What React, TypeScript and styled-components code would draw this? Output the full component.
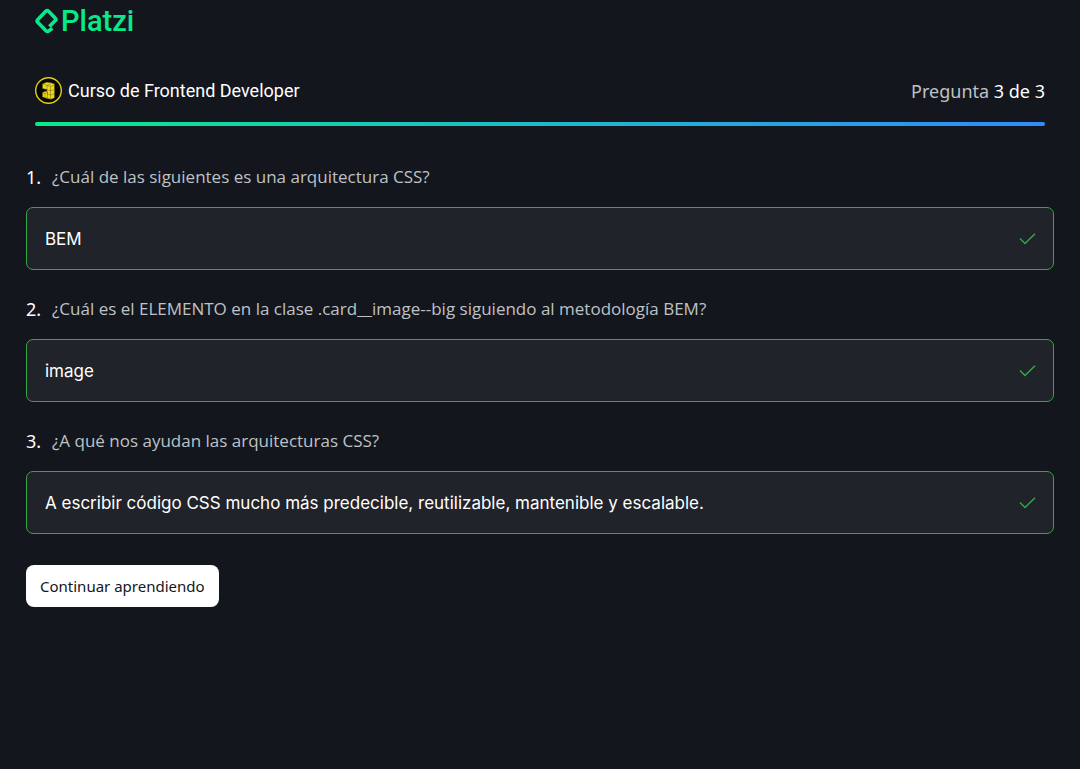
import React from "react";
import styled, { createGlobalStyle } from "styled-components";

const GlobalStyle = createGlobalStyle`
  *, *::before, *::after { box-sizing: border-box; }
  body {
    margin: 0;
    background: #13161c;
    color: #ffffff;
    font-family: Roboto, "Liberation Sans", sans-serif;
    font-size: 18px;
    line-height: 24px;
  }
  h1, p, ol { margin: 0; padding: 0; font: inherit; }
`;

const Page = styled.div`
  min-height: 100vh;
  padding: 5px 26px 24px;
`;

const Header = styled.header`
  padding: 0 9px;
`;

const LogoLink = styled.a`
  display: flex;
  align-items: center;
  gap: 2px;
  width: fit-content;
  height: 32px;
  color: #0ae98a;
  font: 500 29px/32px Roboto, sans-serif;
  text-decoration: none;
`;

const CourseBar = styled.div`
  display: flex;
  align-items: center;
  justify-content: space-between;
  padding-top: 40px;
`;

const Course = styled.div`
  display: flex;
  align-items: center;
  gap: 6px;
  height: 27px;
`;

const Counter = styled.p`
  color: #bec2c7;
  font-family: "Noto Sans", sans-serif;

  strong {
    color: #ffffff;
    font-weight: 400;
  }
`;

const Progress = styled.div`
  height: 4px;
  margin-top: 18px;
  border-radius: 2px;
  background: linear-gradient(90deg, #0ae98a, #1ebac8 50%, #2f8bff);
`;

const Questions = styled.ol`
  display: grid;
  gap: 27px;
  padding-top: 39px;
  list-style: none;
`;

const Question = styled.li`
  display: grid;
  gap: 18px;
`;

const Prompt = styled.p`
  display: flex;
  gap: 10px;
  color: #bec2c7;
  font-family: "Open Sans", sans-serif;
  font-size: 17px;
`;

const Num = styled.span`
  min-width: 16px;
  color: #ffffff;
  font-family: "Noto Sans", sans-serif;
  font-size: 18px;
`;

const Answer = styled.div`
  display: flex;
  align-items: center;
  justify-content: space-between;
  gap: 16px;
  min-height: 63px;
  padding: 12px 17px 12px 18px;
  border: 1px solid #35a648;
  border-radius: 7px;
  background: #20232a;
  font-family: Inter, sans-serif;
  font-size: 17px;
`;

const ContinueButton = styled.button`
  height: 42px;
  margin-top: 31px;
  padding: 0 14px;
  border: 0;
  border-radius: 8px;
  background: #ffffff;
  color: #13161c;
  font: 400 15px/24px "Noto Sans", sans-serif;
  cursor: pointer;
`;

const LogoMark = () => (
  <svg width="24" height="26" viewBox="0 0 24 26" fill="none" stroke="currentColor" strokeWidth="3.6" strokeLinejoin="round" aria-hidden="true">
    <path d="M14.4 18.6 20.3 12.6Q21.4 11.4 20.3 10.2L13.6 3.2Q12.3 1.9 11 3.1L2.7 11.7Q1.5 13 2.7 14.3L11 22.8Q12.4 24.1 13.8 22.9L17.4 20.2" />
  </svg>
);

const CourseBadge = () => (
  <svg width="27" height="27" viewBox="0 0 27 27" aria-hidden="true">
    <circle cx="13.5" cy="13.5" r="12.8" fill="#050505" stroke="#e2ce19" strokeWidth="1.4" />
    <g fill="#f0da20" stroke="#6d620c" strokeWidth=".5" strokeLinejoin="round">
      <path d="M7.5 7 11.5 5.2 16 5.8 19.4 7V20.8L16 22.2 12 21.4V12.6L7.5 11.4Z" />
      <path d="M7.5 15.6 10.5 14.2 12.5 14.8V21.4L7.5 20Z" />
      <path d="M7.5 7 12 8.4 16 6.8M12 8.4V12.6M12 8.4 15.5 9.5 19.4 8M15.5 9.5V22M12 12.6 15.5 14 19.4 12.4M12 17 15.5 18 19.4 16.7M7.5 15.6 10 16.5 12.5 15.5M10 16.5V20.8" fill="none" />
    </g>
  </svg>
);

const Check = () => (
  <svg width="17" height="12" viewBox="0 0 17 12" fill="none" stroke="#35a648" strokeWidth="1.5" role="img" aria-label="Correcta">
    <path d="M1 5.5 6 10.5 16 .8" />
  </svg>
);

const items = [
  { prompt: "¿Cuál de las siguientes es una arquitectura CSS?", answer: "BEM" },
  { prompt: "¿Cuál es el ELEMENTO en la clase .card__image--big siguiendo al metodología BEM?", answer: "image" },
  { prompt: "¿A qué nos ayudan las arquitecturas CSS?", answer: "A escribir código CSS mucho más predecible, reutilizable, mantenible y escalable." },
];

export default function App() {
  return (
    <Page>
      <GlobalStyle />
      <Header>
        <LogoLink href="#">
          <LogoMark />
          Platzi
        </LogoLink>
        <CourseBar>
          <Course>
            <CourseBadge />
            <h1>Curso de Frontend Developer</h1>
          </Course>
          <Counter>
            Pregunta <strong>3 de 3</strong>
          </Counter>
        </CourseBar>
        <Progress />
      </Header>
      <main>
        <Questions>
          {items.map((item, i) => (
            <Question key={item.prompt}>
              <Prompt>
                <Num>{i + 1}.</Num>
                {item.prompt}
              </Prompt>
              <Answer>
                {item.answer}
                <Check />
              </Answer>
            </Question>
          ))}
        </Questions>
        <ContinueButton type="button">Continuar aprendiendo</ContinueButton>
      </main>
    </Page>
  );
}
